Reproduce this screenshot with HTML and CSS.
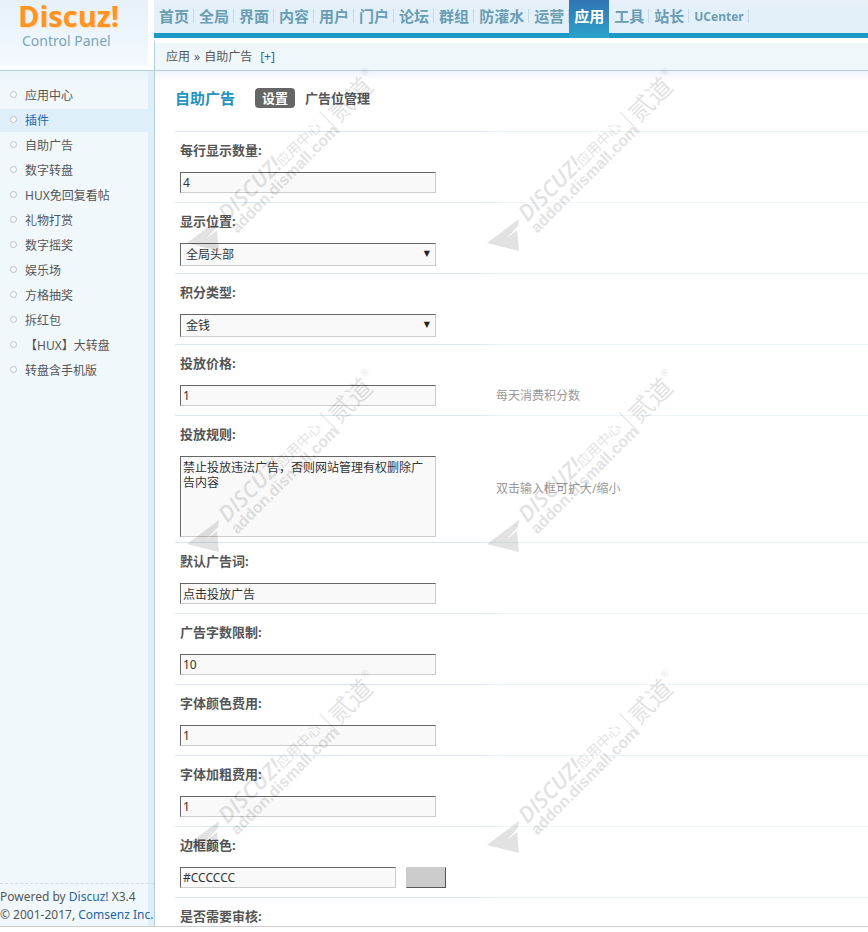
FILE: index.html
```
<!DOCTYPE html>
<html lang="zh-CN">
  <head>
    <meta charset="UTF-8" />
    <meta name="viewport" content="width=device-width, initial-scale=1.0" />
    <title>Discuz! Control Panel</title>
    <link rel="stylesheet" href="styles.css">
  </head>
  <body>
    <div class="frame">
      <header class="header">
        <a class="logo" href="#">
          <span class="logo-name">Discuz!</span>
          <span class="logo-sub">Control Panel</span>
        </a>
        <div class="header-main">
          <nav class="topmenu">
            <a href="#">首页</a>
            <a href="#">全局</a>
            <a href="#">界面</a>
            <a href="#">内容</a>
            <a href="#">用户</a>
            <a href="#">门户</a>
            <a href="#">论坛</a>
            <a href="#">群组</a>
            <a href="#">防灌水</a>
            <a href="#">运营</a>
            <a href="#" class="active">应用</a>
            <a href="#">工具</a>
            <a href="#">站长</a>
            <a href="#" class="latin">UCenter</a>
          </nav>
          <div class="crumbs">
            <span>应用</span><span class="sep">»</span><span>自助广告</span><a href="#">[+]</a>
          </div>
        </div>
      </header>

      <div class="body">
        <aside class="sidebar">
          <ul class="leftmenu">
            <li><a href="#">应用中心</a></li>
            <li><a href="#" class="active">插件</a></li>
            <li><a href="#">自助广告</a></li>
            <li><a href="#">数字转盘</a></li>
            <li><a href="#">HUX免回复看帖</a></li>
            <li><a href="#">礼物打赏</a></li>
            <li><a href="#">数字摇奖</a></li>
            <li><a href="#">娱乐场</a></li>
            <li><a href="#">方格抽奖</a></li>
            <li><a href="#">拆红包</a></li>
            <li><a href="#">【HUX】大转盘</a></li>
            <li><a href="#">转盘含手机版</a></li>
          </ul>
          <div class="copyright">
            Powered by <a href="#">Discuz!</a> X3.4<br>
            © 2001-2017, <a href="#">Comsenz Inc.</a>
          </div>
        </aside>

        <main class="content">
          <div class="tabs">
            <h1>自助广告</h1>
            <a href="#" class="current">设置</a>
            <a href="#">广告位管理</a>
          </div>
          <form>
            <div class="row">
              <label for="perRow">每行显示数量:</label>
              <div class="field"><input type="text" id="perRow" value="4"></div>
            </div>
            <div class="row">
              <label for="position">显示位置:</label>
              <div class="field">
                <span class="select">
                  <select id="position"><option>全局头部</option></select>
                </span>
              </div>
            </div>
            <div class="row">
              <label for="credit">积分类型:</label>
              <div class="field">
                <span class="select">
                  <select id="credit"><option>金钱</option></select>
                </span>
              </div>
            </div>
            <div class="row">
              <label for="price">投放价格:</label>
              <div class="field"><input type="text" id="price" value="1"></div>
              <p class="tip">每天消费积分数</p>
            </div>
            <div class="row">
              <label for="rules">投放规则:</label>
              <div class="field"><textarea id="rules">禁止投放违法广告，否则网站管理有权删除广告内容</textarea></div>
              <p class="tip tip-tall">双击输入框可扩大/缩小</p>
            </div>
            <div class="row">
              <label for="defaultText">默认广告词:</label>
              <div class="field"><input type="text" id="defaultText" value="点击投放广告"></div>
            </div>
            <div class="row">
              <label for="maxLength">广告字数限制:</label>
              <div class="field"><input type="text" id="maxLength" value="10"></div>
            </div>
            <div class="row">
              <label for="colorFee">字体颜色费用:</label>
              <div class="field"><input type="text" id="colorFee" value="1"></div>
            </div>
            <div class="row">
              <label for="boldFee">字体加粗费用:</label>
              <div class="field"><input type="text" id="boldFee" value="1"></div>
            </div>
            <div class="row">
              <label for="borderColor">边框颜色:</label>
              <div class="field">
                <input type="text" id="borderColor" class="short" value="#CCCCCC">
                <button type="button" class="swatch" aria-label="选择颜色"></button>
              </div>
            </div>
            <div class="row">
              <label for="audit">是否需要审核:</label>
              <div class="field"><input type="checkbox" id="audit"></div>
            </div>
          </form>
        </main>
      </div>
    </div>

    <svg class="watermark" aria-hidden="true">
      <defs>
        <g id="mark">
          <path d="M0 0 L32 -24 L31 -17 L19 -4 L30 -13 L32 8 Z" />
          <g transform="rotate(-45)">
            <text class="mark-brand" x="43" y="14">DISCUZ!</text>
            <text class="mark-center" x="121" y="14">应用中心</text>
            <rect x="186" y="1" width="1" height="29" />
            <text class="mark-shop" x="192" y="23">贰道</text>
            <text class="mark-reg" x="243" y="8">®</text>
            <text class="mark-url" x="42" y="29">addon.dismall.com</text>
          </g>
        </g>
      </defs>
      <use href="#mark" x="187" y="243" />
      <use href="#mark" x="487" y="243" />
      <use href="#mark" x="187" y="544" />
      <use href="#mark" x="487" y="544" />
      <use href="#mark" x="187" y="845" />
      <use href="#mark" x="487" y="845" />
    </svg>
  </body>
</html>
```
FILE: styles.css
```
* {
  box-sizing: border-box;
}
body {
  margin: 0;
  background: #fff;
  color: #555;
  font: 12px/18px "Noto Sans", "Noto Sans CJK SC", sans-serif;
}
a {
  color: #2366a8;
  text-decoration: none;
}
.frame {
  display: flex;
  flex-direction: column;
  height: calc(100vh - 5px);
  overflow: hidden;
  border-bottom: 1px solid #ccc;
}

/* header */
.header {
  display: flex;
  flex: none;
  border-bottom: 1px solid #b5cfd9;
}
.logo {
  display: flex;
  flex-direction: column;
  width: 154px;
  padding-left: 18px;
  background: linear-gradient(90deg, transparent 148px, #fff 148px),
    linear-gradient(#e6f1fa, #f3f9fe 65px, #fff 66px);
}
.logo-name {
  color: #ff9326;
  font: bold 29px/32px "Open Sans", sans-serif;
  text-shadow: 1px 1px 1px #ffd9a8;
}
.logo-sub {
  padding-left: 4px;
  color: #7ba5b8;
  font-size: 14px;
}
.header-main {
  flex: 1;
  min-width: 0;
}
.topmenu {
  display: flex;
  height: 38px;
  background: linear-gradient(#e9f1f9, #e3f0fa 6px);
  border-bottom: 5px solid #1a9ac4;
}
.topmenu a {
  height: 33px;
  padding: 0 5px;
  color: #6a9db3;
  font-size: 15px;
  font-weight: bold;
  line-height: 33px;
  white-space: nowrap;
  background: linear-gradient(#c3dae6, #c3dae6) right 9px / 1px 14px no-repeat;
}
.topmenu .active {
  height: 38px;
  color: #fff;
  background: linear-gradient(#3274b4, #2aa3cb);
}
.topmenu .latin {
  font-size: 12px;
}
.crumbs {
  height: 32px;
  padding-left: 11px;
  line-height: 27px;
  background: #f0f7fb;
  border-top: 5px solid #fff;
  border-left: 1px solid #b5cfd9;
}
.crumbs .sep {
  padding: 0 4px;
}
.crumbs a {
  padding-left: 8px;
}

/* sidebar */
.body {
  display: flex;
  flex: 1;
  min-height: 0;
}
.sidebar {
  display: flex;
  flex-direction: column;
  flex: none;
  justify-content: space-between;
  width: 155px;
  background: linear-gradient(#e8f3fa, #f1f8fc 10px);
  border-right: 1px solid #b5cfd9;
  box-shadow: inset -6px 0 #deeffa;
}
.leftmenu {
  margin: 0;
  padding: 13px 6px 0 0;
  list-style: none;
}
.leftmenu li {
  height: 25px;
}
.leftmenu a {
  display: flex;
  align-items: center;
  gap: 8px;
  height: 23px;
  padding: 1px 0 0 10px;
  color: #555;
  white-space: nowrap;
}
.leftmenu a::before {
  content: "";
  width: 5px;
  height: 5px;
  margin-bottom: 4px;
  background: #fff;
  border: 1px solid #b4c0c6;
  border-radius: 50%;
}
.leftmenu .active {
  color: #2366a8;
  background: #deeffa;
}
.copyright {
  padding: 4px 0 2px;
  white-space: nowrap;
  border-top: 1px dashed #ccdbe4;
}

/* settings form */
.content {
  flex: 1;
  min-width: 0;
  padding-left: 20px;
  overflow: hidden;
  background: linear-gradient(#eff3fb, #fff 10px);
}
.tabs {
  display: flex;
  align-items: center;
  gap: 10px;
  height: 60px;
  padding-bottom: 6px;
}
.tabs h1 {
  margin: 0 10px 0 0;
  color: #2592c0;
  font-size: 15px;
}
.tabs a {
  color: #555;
  font-size: 13px;
  font-weight: bold;
  line-height: 20px;
}
.tabs .current {
  padding: 0 7px;
  color: #fff;
  background: #666;
  border-radius: 4px;
}
.row {
  display: grid;
  grid-template-columns: 316px 1fr;
  padding-left: 5px;
  background: linear-gradient(90deg, #d9e8f0 300px, #eef5f9 330px) top / 100% 1px no-repeat;
}
.row label {
  grid-column: 1 / -1;
  padding: 10px 0 13px;
  font-size: 13px;
  font-weight: bold;
}
.field {
  display: flex;
  align-items: flex-start;
  gap: 10px;
  min-height: 30px;
  padding-bottom: 5px;
}
input[type="text"],
textarea,
select {
  width: 256px;
  margin: 0;
  color: #333;
  font: inherit;
  background: #f9f9f9;
  border: 1px solid;
  border-color: #666 #ccc #ccc #666;
  border-radius: 0;
}
input[type="text"] {
  height: 21px;
  padding: 0 2px;
}
input.short {
  width: 216px;
}
textarea {
  height: 81px;
  padding: 3px 2px;
  line-height: 15px;
  resize: none;
}
.select {
  position: relative;
}
select {
  display: block;
  height: 23px;
  padding: 0 5px;
  appearance: none;
}
.select::after {
  content: "▼";
  position: absolute;
  top: 2px;
  right: 6px;
  color: #222;
  font: 8px/18px "DejaVu Sans", sans-serif;
  pointer-events: none;
}
.swatch {
  width: 40px;
  height: 21px;
  padding: 0;
  background: #ccc;
  border: 1px solid;
  border-color: #ccc #555 #555 #ccc;
}
.tip {
  align-self: center;
  margin: 0;
  padding-bottom: 8px;
  color: #999;
}
.tip-tall {
  padding-bottom: 20px;
}

/* watermark */
.watermark {
  position: absolute;
  top: 0;
  left: 0;
  width: 100%;
  height: 100%;
  fill: #000;
  opacity: 0.11;
  pointer-events: none;
}
.mark-brand {
  font: italic 600 22px "Open Sans", sans-serif;
}
.mark-center {
  font: 14px "Noto Sans CJK SC", sans-serif;
}
.mark-shop {
  font: 25px "Noto Sans CJK SC", sans-serif;
}
.mark-reg {
  font: 10px "Liberation Sans", sans-serif;
}
.mark-url {
  font: bold 16px "Liberation Sans", sans-serif;
}
```
